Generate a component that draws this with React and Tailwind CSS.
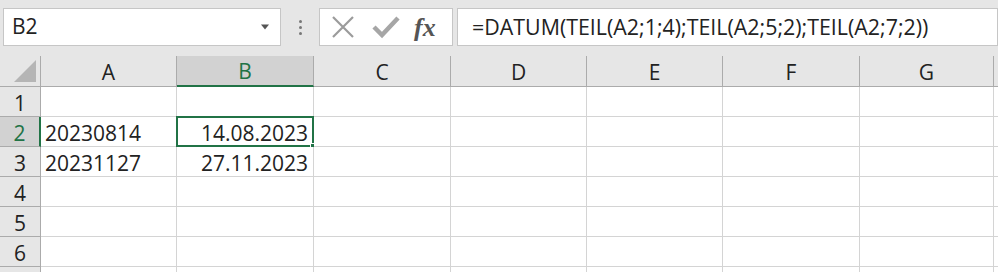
import React from 'react';

const cols = ['A', 'B', 'C', 'D', 'E', 'F', 'G'];
const widths = [136, 137, 137, 136, 136, 137, 134];

const data = {
  2: { A: '20230814', B: '14.08.2023' },
  3: { A: '20231127', B: '27.11.2023' },
};

function FormulaBar() {
  return (
    <div className="flex h-[56px] items-start bg-[#e6e6e6] pt-[8px] pl-[3px]">
      <div className="flex h-[38px] w-[278px] items-center justify-between border border-[#c6c6c6] bg-white pl-[8px] pr-[10px]">
        <span className="text-[21px] text-[#222]">B2</span>
        <svg width="10" height="6" viewBox="0 0 10 6">
          <path d="M1 0.5 L9 0.5 L5 5.5 Z" fill="#555" />
        </svg>
      </div>
      <div className="flex h-[38px] w-[38px] flex-col items-center justify-center gap-[3px]">
        <span className="h-[3px] w-[3px] rounded-full bg-[#777]" />
        <span className="h-[3px] w-[3px] rounded-full bg-[#777]" />
        <span className="h-[3px] w-[3px] rounded-full bg-[#777]" />
      </div>
      <div className="flex h-[38px] w-[134px] items-center border border-[#c6c6c6] bg-white">
        <svg className="ml-[10px]" width="26" height="26" viewBox="0 0 26 26">
          <path d="M3 3 L23 23 M23 3 L3 23" stroke="#9b9b9b" strokeWidth="2.2" />
        </svg>
        <svg className="ml-[16px]" width="28" height="26" viewBox="0 0 28 26">
          <path d="M2 13 L10 21 L26 4" stroke="#a6a6a6" strokeWidth="4.5" fill="none" />
        </svg>
        <span
          className="ml-[14px] text-[26px] italic font-bold text-[#555]"
          style={{ fontFamily: '"Liberation Serif", serif' }}
        >
          fx
        </span>
      </div>
      <div className="ml-[4px] flex h-[38px] flex-1 items-center border border-[#c6c6c6] bg-white pl-[14px]">
        <span className="text-[21.4px] text-[#222]">=DATUM(TEIL(A2;1;4);TEIL(A2;5;2);TEIL(A2;7;2))</span>
      </div>
    </div>
  );
}

function HeaderRow() {
  return (
    <div className="flex h-[31px]">
      <div className="relative w-[41px] shrink-0 border-r border-b border-[#ababab] bg-[#e6e6e6]">
        <svg className="absolute right-[4px] bottom-[4px]" width="22" height="22" viewBox="0 0 22 22">
          <path d="M22 0 L22 22 L0 22 Z" fill="#b5b5b5" />
        </svg>
      </div>
      {cols.map((c, i) => {
        const sel = c === 'B';
        return (
          <div
            key={c}
            style={{ width: widths[i] }}
            className={
              sel
                ? 'flex shrink-0 items-center justify-center pt-[3px] border-r border-[#ababab] border-b-2 border-b-[#217346] bg-[#d2d2d2] text-[21px] text-[#217346]'
                : 'flex shrink-0 items-center justify-center pt-[3px] border-r border-b border-[#ababab] bg-[#e6e6e6] text-[21px] text-[#222]'
            }
          >
            {c}
          </div>
        );
      })}
      <div className="flex-1 border-b border-[#ababab] bg-[#e6e6e6]" />
    </div>
  );
}

function Row({ n, label = true }) {
  const sel = n === 2;
  return (
    <div className="flex h-[30px]">
      <div
        className={
          sel
            ? 'flex w-[41px] shrink-0 items-center justify-center pt-[4px] border-b border-[#ababab] border-r-2 border-r-[#217346] bg-[#d2d2d2] text-[21px] text-[#217346]'
            : 'flex w-[41px] shrink-0 items-center justify-center pt-[4px] border-r border-b border-[#ababab] bg-[#e6e6e6] text-[21px] text-[#222]'
        }
      >
        {label ? n : ''}
      </div>
      {cols.map((c, i) => {
        const v = data[n] && data[n][c];
        const isB = c === 'B';
        return (
          <div
            key={c}
            style={{ width: widths[i] }}
            className={
              'relative flex shrink-0 items-center pt-[4px] border-r border-b border-[#d4d4d4] bg-white text-[21px] text-[#222] ' +
              (isB ? 'justify-end pr-[5px]' : 'justify-start pl-[4px]')
            }
          >
            {v}
            {sel && isB && (
              <div className="absolute -top-[1px] -left-[1px] -right-[1px] -bottom-[1px] border-2 border-[#217346]">
                <span className="absolute -right-[4px] -bottom-[4px] h-[6px] w-[6px] border border-white bg-[#217346]" />
              </div>
            )}
          </div>
        );
      })}
      <div className="flex-1 border-b border-[#d4d4d4] bg-white" />
    </div>
  );
}

export default function App() {
  return (
    <div
      className="h-[272px] w-[998px] overflow-hidden bg-white"
      style={{ fontFamily: '"Open Sans", "Noto Sans", sans-serif' }}
    >
      <FormulaBar />
      <HeaderRow />
      {[1, 2, 3, 4, 5, 6].map((n) => (
        <Row key={n} n={n} />
      ))}
      <Row n={7} label={false} />
    </div>
  );
}
